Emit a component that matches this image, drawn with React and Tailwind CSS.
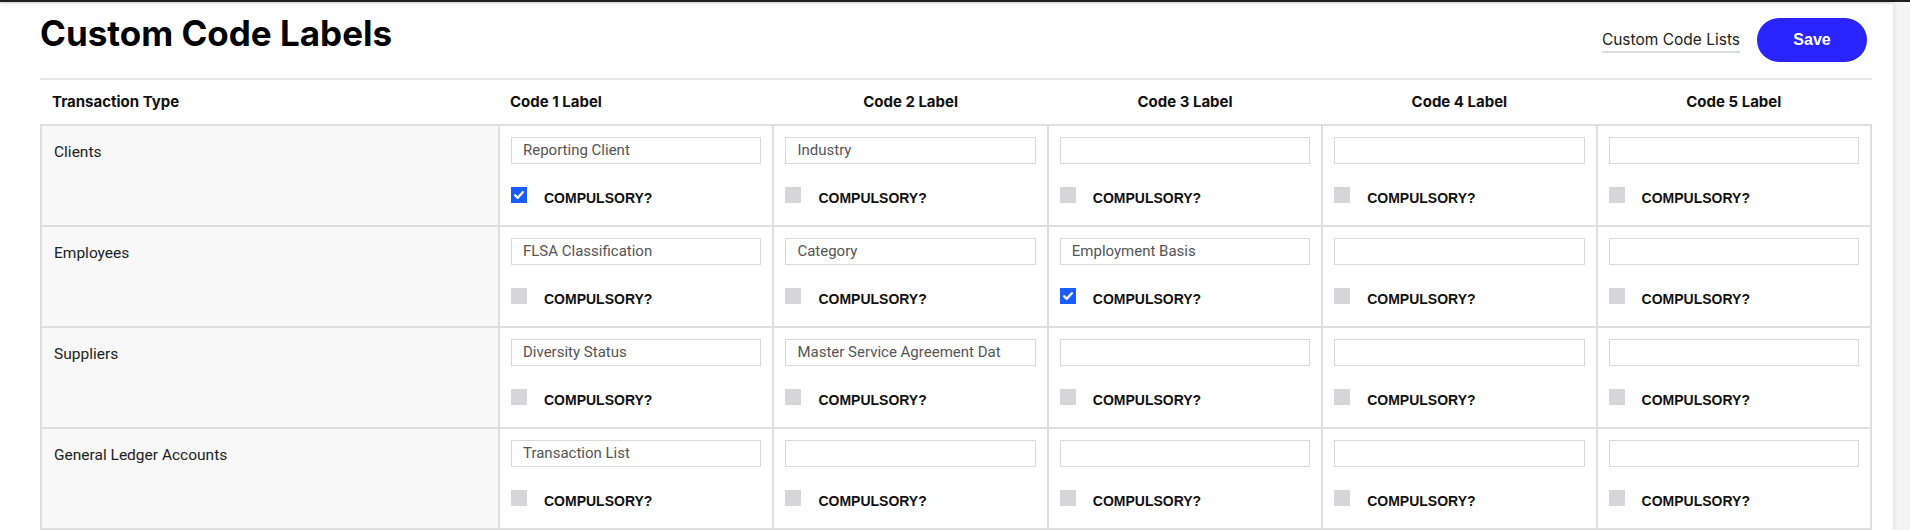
import React from "react";

const rows = [
  { name: "Clients", values: ["Reporting Client", "Industry", "", "", ""], checked: [true, false, false, false, false] },
  { name: "Employees", values: ["FLSA Classification", "Category", "Employment Basis", "", ""], checked: [false, false, true, false, false] },
  { name: "Suppliers", values: ["Diversity Status", "Master Service Agreement Dat", "", "", ""], checked: [false, false, false, false, false] },
  { name: "General Ledger Accounts", values: ["Transaction List", "", "", "", ""], checked: [false, false, false, false, false] },
];

function Check({ on }) {
  if (on) {
    return (
      <span className="flex h-[16px] w-[16px] shrink-0 items-center justify-center bg-[#1a5cff]">
        <svg width="12" height="12" viewBox="0 0 12 12" fill="none">
          <path d="M2.2 6.3 L4.8 8.8 L9.8 3.2" stroke="white" strokeWidth="2.4" strokeLinecap="round" strokeLinejoin="round" />
        </svg>
      </span>
    );
  }
  return <span className="block h-[16px] w-[16px] shrink-0 bg-[#d6d6d8]" />;
}

export default function App() {
  return (
    <div className="flex h-[530px] w-[1910px] flex-col overflow-hidden bg-white">
      <div className="h-[2px] w-full shrink-0 bg-[#1f1f1f] shadow-[0_1px_3px_rgba(0,0,0,0.25)]" />
      <div className="flex min-h-0 flex-1">
        <div className="min-w-0 flex-1 pl-[40px] pr-[21px]">
          <div className="flex h-[78px] items-start justify-between border-b-2 border-[#e3e6ea]">
            <h1 className="mt-[14px] font-['Inter',sans-serif] text-[35px] leading-[35px] font-bold text-black">
              Custom Code Labels
            </h1>
            <div className="mt-[16px] mr-[5px] flex items-center gap-[17px]">
              <span className="mt-[2px] border-b-2 border-[#d9dde3] pb-[1px] font-['Inter',sans-serif] text-[15.5px] leading-[20px] text-[#222]">
                Custom Code Lists
              </span>
              <button className="h-[44px] w-[110px] rounded-full bg-[#2a24ff] font-['Liberation_Sans',sans-serif] text-[16px] font-bold text-white">
                Save
              </button>
            </div>
          </div>
          <div className="grid h-[44px] grid-cols-[456px_repeat(5,minmax(0,1fr))] items-center px-[2px] font-['Inter',sans-serif] text-[15px] font-bold text-[#111]">
            <div className="pl-[10px]">Transaction Type</div>
            <div className="pl-[12px]">Code 1 Label</div>
            <div className="pl-[2px] text-center">Code 2 Label</div>
            <div className="pl-[2px] text-center">Code 3 Label</div>
            <div className="pl-[2px] text-center">Code 4 Label</div>
            <div className="pl-[2px] text-center">Code 5 Label</div>
          </div>
          <div className="border-2 border-[#dedede]">
            {rows.map((r, i) => (
              <div
                key={r.name}
                className={`grid h-[99px] grid-cols-[456px_repeat(5,minmax(0,1fr))] ${i > 0 ? "box-content border-t-2 border-[#dedede]" : ""}`}
              >
                <div className="bg-[#f8f8f8] pt-[16px] pl-[12px] font-['Roboto',sans-serif] text-[15.5px] leading-[20px] text-[#222]">
                  {r.name}
                </div>
                {r.values.map((v, j) => (
                  <div key={j} className="border-l-2 border-[#dedede] px-[11px] pt-[11px]">
                    <div className="flex h-[27px] items-center overflow-hidden border border-[#d9d9d9] bg-white pl-[11px] font-['Roboto',sans-serif] text-[15px] whitespace-nowrap text-[#555]">
                      {v}
                    </div>
                    <div className="mt-[23px] flex items-start gap-[17px]">
                      <Check on={r.checked[j]} />
                      <span className="mt-[3px] font-['Liberation_Sans',sans-serif] text-[14px] leading-[16px] font-bold text-[#111]">
                        COMPULSORY?
                      </span>
                    </div>
                  </div>
                ))}
              </div>
            ))}
          </div>
        </div>
        <div className="w-[17px] shrink-0 bg-[#f4f4f4] shadow-[inset_4px_0_5px_-3px_rgba(0,0,0,0.08)]" />
      </div>
    </div>
  );
}
